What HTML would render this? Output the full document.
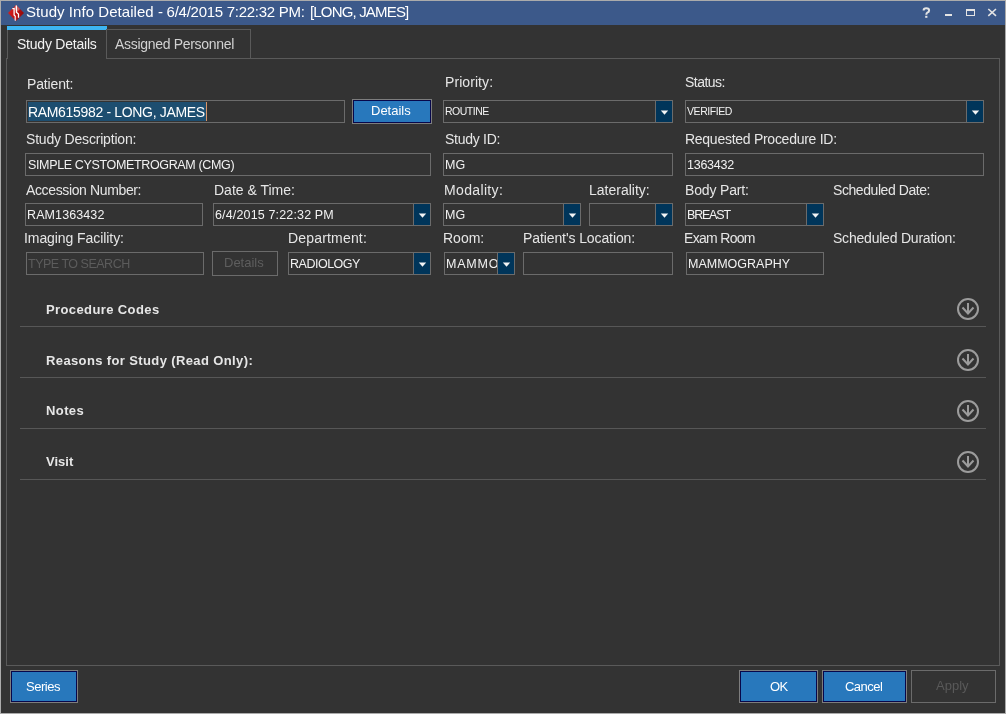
<!DOCTYPE html>
<html><head><meta charset="utf-8">
<style>
*{margin:0;padding:0;box-sizing:border-box}
html,body{width:1006px;height:714px;overflow:hidden;background:#333333}
body{position:relative;font-family:"Liberation Sans",sans-serif;font-size:12px;color:#e8e8e8}
.a{position:absolute}
.t{white-space:nowrap;line-height:1.15;will-change:transform}
</style></head><body>

<div class="a" style="left:0;top:0;width:1006px;height:714px;border:1px solid #ababab"></div>
<div class="a" style="left:1px;top:1px;width:1004px;height:24px;background:#3c598a"></div>
<svg class="a" style="left:7px;top:4px" width="18" height="18" viewBox="0 0 18 18">
<defs><linearGradient id="g" x1="0" y1="0.3" x2="1" y2="0.7"><stop offset="0" stop-color="#d42020"/><stop offset="0.5" stop-color="#c01010"/><stop offset="1" stop-color="#8a0a0a"/></linearGradient></defs>
<path d="M9 1 L17 9 L9 17 L1 9 Z" fill="url(#g)"/>
<path d="M9 1 L13 5 L10 8 L7 4 Z" fill="#e09090" opacity="0.6"/>
<path d="M5.3 4.6 H7.1 V11 L8.4 12.4 V16.6" stroke="#ffffff" stroke-width="1.3" fill="none"/>
<path d="M8.4 12.4 V16.6" stroke="#f4c4c4" stroke-width="1.3" fill="none"/>
<path d="M9.4 1.6 V8.3 L11.5 10 V13.8" stroke="#ffffff" stroke-width="1.3" fill="none"/>
</svg>
<div class="a t" style="left:26px;top:3px;font-size:15px;color:#ffffff;letter-spacing:0.050px">Study Info Detailed</div>
<div class="a t" style="left:158px;top:3px;font-size:15px;color:#ffffff;letter-spacing:-0.270px">- 6/4/2015 7:22:32 PM:</div>
<div class="a t" style="left:310px;top:3px;font-size:15px;color:#ffffff;letter-spacing:-0.830px">[LONG, JAMES]</div>
<svg class="a" style="left:920px;top:5px" width="80" height="16" viewBox="0 0 80 16">
<path d="M3.6 5.6 Q3.6 3.3 6.3 3.3 Q9.1 3.3 9.1 5.4 Q9.1 6.9 7.3 7.7 Q6.3 8.2 6.3 9.8" stroke="#e4e4e4" stroke-width="2" fill="none"/>
<rect x="5.2" y="10.8" width="2.2" height="2" fill="#e4e4e4"/>
<rect x="25" y="9" width="7" height="2" fill="#e4e4e4"/>
<path d="M46 4 H55 V11 H46 Z M47 6 V10 H54 V6 Z" fill="#e4e4e4" fill-rule="evenodd"/>
<path d="M68.3 4 L76 10.8 M76 4 L68.3 10.8" stroke="#e4e4e4" stroke-width="1.6" fill="none"/>
</svg>
<div class="a" style="left:6px;top:58px;width:994px;height:608px;border:1px solid #5a5a5a"></div>
<div class="a" style="left:7px;top:26px;width:100px;height:4px;background:#3db5f2"></div>
<div class="a" style="left:7px;top:30px;width:100px;height:29px;border-left:1px solid #5a5a5a;border-right:1px solid #5a5a5a;background:#333333"></div>
<div class="a" style="left:106px;top:29px;width:145px;height:30px;border:1px solid #5a5a5a;border-left:none"></div>
<div class="a t" style="left:17px;top:36px;font-size:14px;color:#f2f2f2;letter-spacing:-0.225px">Study Details</div>
<div class="a t" style="left:115px;top:36px;font-size:14px;color:#d2d2d2;letter-spacing:-0.309px">Assigned Personnel</div>
<div class="a t" style="left:27px;top:76px;font-size:14px;color:#e6e6e6;letter-spacing:-0.143px">Patient:</div>
<div class="a t" style="left:445px;top:74px;font-size:14px;color:#e6e6e6;letter-spacing:0.075px">Priority:</div>
<div class="a t" style="left:685px;top:74px;font-size:14px;color:#e6e6e6;letter-spacing:-0.533px">Status:</div>
<div class="a" style="left:26px;top:100px;width:319px;height:23px;border:1px solid #6b6b6b"></div>
<div class="a" style="left:28px;top:102px;width:178px;height:19px;background:#1d4e70"></div>
<div class="a" style="left:206px;top:102px;width:1px;height:19px;background:#d8956a"></div>
<div class="a t" style="left:28px;top:104px;font-size:14px;color:#ffffff;letter-spacing:-0.330px">RAM615982 - LONG, JAMES</div>
<div class="a" style="left:352px;top:99px;width:80px;height:25px;background:#2878bc;border:1px solid #7d7d7d;box-shadow:inset 0 0 0 1px #07074a"></div>
<div class="a t" style="left:371px;top:104px;font-size:13px;color:#ffffff;letter-spacing:0.000px">Details</div>
<div class="a" style="left:443px;top:100px;width:230px;height:23px;border:1px solid #6b6b6b"></div>
<div class="a t" style="left:445px;top:105px;font-size:10.5px;color:#f2f2f2;letter-spacing:-0.500px">ROUTINE</div>
<div class="a" style="left:655px;top:101px;width:1px;height:21px;background:#6b6b6b"></div>
<div class="a" style="left:656px;top:101px;width:16px;height:21px;background:#00355a"></div>
<svg class="a" style="left:660px;top:110px" width="9" height="6" viewBox="0 0 9 6"><path d="M0.8 0.6 L8.2 0.6 L4.5 4.7 Z" fill="#f4f4f4"/></svg>
<div class="a" style="left:685px;top:100px;width:299px;height:23px;border:1px solid #6b6b6b"></div>
<div class="a t" style="left:687px;top:105px;font-size:10.5px;color:#f2f2f2;letter-spacing:-0.429px">VERIFIED</div>
<div class="a" style="left:966px;top:101px;width:1px;height:21px;background:#6b6b6b"></div>
<div class="a" style="left:967px;top:101px;width:16px;height:21px;background:#00355a"></div>
<svg class="a" style="left:971px;top:110px" width="9" height="6" viewBox="0 0 9 6"><path d="M0.8 0.6 L8.2 0.6 L4.5 4.7 Z" fill="#f4f4f4"/></svg>
<div class="a t" style="left:26px;top:131px;font-size:14px;color:#e6e6e6;letter-spacing:-0.188px">Study Description:</div>
<div class="a t" style="left:445px;top:131px;font-size:14px;color:#e6e6e6;letter-spacing:-0.275px">Study ID:</div>
<div class="a t" style="left:685px;top:131px;font-size:14px;color:#e6e6e6;letter-spacing:-0.270px">Requested Procedure ID:</div>
<div class="a" style="left:25px;top:153px;width:406px;height:23px;border:1px solid #6b6b6b"></div>
<div class="a t" style="left:28px;top:158px;font-size:12.5px;color:#f2f2f2;letter-spacing:-0.354px">SIMPLE CYSTOMETROGRAM (CMG)</div>
<div class="a" style="left:443px;top:153px;width:230px;height:23px;border:1px solid #6b6b6b"></div>
<div class="a t" style="left:445px;top:158px;font-size:12.5px;color:#f2f2f2;letter-spacing:0.000px">MG</div>
<div class="a" style="left:685px;top:153px;width:299px;height:23px;border:1px solid #6b6b6b"></div>
<div class="a t" style="left:687px;top:158px;font-size:12.5px;color:#f2f2f2;letter-spacing:-0.250px">1363432</div>
<div class="a t" style="left:26px;top:182px;font-size:14px;color:#e6e6e6;letter-spacing:-0.369px">Accession Number:</div>
<div class="a t" style="left:214px;top:182px;font-size:14px;color:#e6e6e6;letter-spacing:0.000px">Date &amp; Time:</div>
<div class="a t" style="left:444px;top:182px;font-size:14px;color:#e6e6e6;letter-spacing:0.350px">Modality:</div>
<div class="a t" style="left:589px;top:182px;font-size:14px;color:#e6e6e6;letter-spacing:0.000px">Laterality:</div>
<div class="a t" style="left:685px;top:182px;font-size:14px;color:#e6e6e6;letter-spacing:-0.156px">Body Part:</div>
<div class="a t" style="left:833px;top:182px;font-size:14px;color:#e6e6e6;letter-spacing:-0.430px">Scheduled Date:</div>
<div class="a" style="left:25px;top:203px;width:178px;height:23px;border:1px solid #6b6b6b"></div>
<div class="a t" style="left:27px;top:208px;font-size:12.5px;color:#f2f2f2;letter-spacing:0.100px">RAM1363432</div>
<div class="a" style="left:213px;top:203px;width:218px;height:23px;border:1px solid #6b6b6b"></div>
<div class="a t" style="left:215px;top:208px;font-size:12.5px;color:#f2f2f2;letter-spacing:0.150px">6/4/2015 7:22:32 PM</div>
<div class="a" style="left:413px;top:204px;width:1px;height:21px;background:#6b6b6b"></div>
<div class="a" style="left:414px;top:204px;width:16px;height:21px;background:#00355a"></div>
<svg class="a" style="left:418px;top:213px" width="9" height="6" viewBox="0 0 9 6"><path d="M0.8 0.6 L8.2 0.6 L4.5 4.7 Z" fill="#f4f4f4"/></svg>
<div class="a" style="left:443px;top:203px;width:138px;height:23px;border:1px solid #6b6b6b"></div>
<div class="a t" style="left:445px;top:208px;font-size:12.5px;color:#f2f2f2;letter-spacing:0.000px">MG</div>
<div class="a" style="left:563px;top:204px;width:1px;height:21px;background:#6b6b6b"></div>
<div class="a" style="left:564px;top:204px;width:16px;height:21px;background:#00355a"></div>
<svg class="a" style="left:568px;top:213px" width="9" height="6" viewBox="0 0 9 6"><path d="M0.8 0.6 L8.2 0.6 L4.5 4.7 Z" fill="#f4f4f4"/></svg>
<div class="a" style="left:589px;top:203px;width:84px;height:23px;border:1px solid #6b6b6b"></div>
<div class="a" style="left:655px;top:204px;width:1px;height:21px;background:#6b6b6b"></div>
<div class="a" style="left:656px;top:204px;width:16px;height:21px;background:#00355a"></div>
<svg class="a" style="left:660px;top:213px" width="9" height="6" viewBox="0 0 9 6"><path d="M0.8 0.6 L8.2 0.6 L4.5 4.7 Z" fill="#f4f4f4"/></svg>
<div class="a" style="left:685px;top:203px;width:139px;height:23px;border:1px solid #6b6b6b"></div>
<div class="a t" style="left:687px;top:208px;font-size:12.5px;color:#f2f2f2;letter-spacing:-1.200px">BREAST</div>
<div class="a" style="left:806px;top:204px;width:1px;height:21px;background:#6b6b6b"></div>
<div class="a" style="left:807px;top:204px;width:16px;height:21px;background:#00355a"></div>
<svg class="a" style="left:811px;top:213px" width="9" height="6" viewBox="0 0 9 6"><path d="M0.8 0.6 L8.2 0.6 L4.5 4.7 Z" fill="#f4f4f4"/></svg>
<div class="a t" style="left:24px;top:230px;font-size:14px;color:#e6e6e6;letter-spacing:-0.075px">Imaging Facility:</div>
<div class="a t" style="left:288px;top:230px;font-size:14px;color:#e6e6e6;letter-spacing:0.180px">Department:</div>
<div class="a t" style="left:443px;top:230px;font-size:14px;color:#e6e6e6;letter-spacing:0.000px">Room:</div>
<div class="a t" style="left:523px;top:230px;font-size:14px;color:#e6e6e6;letter-spacing:-0.100px">Patient's Location:</div>
<div class="a t" style="left:684px;top:230px;font-size:14px;color:#e6e6e6;letter-spacing:-0.688px">Exam Room</div>
<div class="a t" style="left:833px;top:230px;font-size:14px;color:#e6e6e6;letter-spacing:-0.214px">Scheduled Duration:</div>
<div class="a" style="left:26px;top:252px;width:178px;height:23px;border:1px solid #6b6b6b"></div>
<div class="a t" style="left:28px;top:257px;font-size:12.5px;color:#5c5c5c;letter-spacing:-0.492px">TYPE TO SEARCH</div>
<div class="a" style="left:212px;top:251px;width:66px;height:25px;border:1px solid #6b6b6b"></div>
<div class="a t" style="left:224px;top:256px;font-size:13px;color:#5e5e5e;letter-spacing:0.000px">Details</div>
<div class="a" style="left:288px;top:252px;width:143px;height:23px;border:1px solid #6b6b6b"></div>
<div class="a t" style="left:290px;top:257px;font-size:12.5px;color:#f2f2f2;letter-spacing:-0.487px">RADIOLOGY</div>
<div class="a" style="left:413px;top:253px;width:1px;height:21px;background:#6b6b6b"></div>
<div class="a" style="left:414px;top:253px;width:16px;height:21px;background:#00355a"></div>
<svg class="a" style="left:418px;top:262px" width="9" height="6" viewBox="0 0 9 6"><path d="M0.8 0.6 L8.2 0.6 L4.5 4.7 Z" fill="#f4f4f4"/></svg>
<div class="a" style="left:444px;top:252px;width:71px;height:23px;border:1px solid #6b6b6b"></div>
<div class="a t" style="left:446px;top:257px;font-size:12.5px;color:#f2f2f2;letter-spacing:0.800px;width:51px;overflow:hidden">MAMMOGRAPHY</div>
<div class="a" style="left:497px;top:253px;width:1px;height:21px;background:#6b6b6b"></div>
<div class="a" style="left:498px;top:253px;width:16px;height:21px;background:#00355a"></div>
<svg class="a" style="left:502px;top:262px" width="9" height="6" viewBox="0 0 9 6"><path d="M0.8 0.6 L8.2 0.6 L4.5 4.7 Z" fill="#f4f4f4"/></svg>
<div class="a" style="left:523px;top:252px;width:150px;height:23px;border:1px solid #6b6b6b"></div>
<div class="a" style="left:686px;top:252px;width:138px;height:23px;border:1px solid #6b6b6b"></div>
<div class="a t" style="left:688px;top:257px;font-size:12.5px;color:#f2f2f2;letter-spacing:0.000px">MAMMOGRAPHY</div>
<div class="a t" style="left:46px;top:303px;font-size:13px;color:#e6e6e6;letter-spacing:0.393px;font-weight:bold">Procedure Codes</div>
<div class="a" style="left:20px;top:326px;width:966px;height:1px;background:#575757"></div>
<svg class="a" style="left:956px;top:297px" width="24" height="24" viewBox="0 0 24 24"><circle cx="12" cy="12" r="10" stroke="#9c9c9c" stroke-width="2" fill="none"/><path d="M12 6 L12 16.5 M6.5 10.5 L12 16.5 L17.5 10.5" stroke="#9c9c9c" stroke-width="2" fill="none"/></svg>
<div class="a t" style="left:46px;top:354px;font-size:13px;color:#e6e6e6;letter-spacing:0.379px;font-weight:bold">Reasons for Study (Read Only):</div>
<div class="a" style="left:20px;top:377px;width:966px;height:1px;background:#575757"></div>
<svg class="a" style="left:956px;top:348px" width="24" height="24" viewBox="0 0 24 24"><circle cx="12" cy="12" r="10" stroke="#9c9c9c" stroke-width="2" fill="none"/><path d="M12 6 L12 16.5 M6.5 10.5 L12 16.5 L17.5 10.5" stroke="#9c9c9c" stroke-width="2" fill="none"/></svg>
<div class="a t" style="left:46px;top:404px;font-size:13px;color:#e6e6e6;letter-spacing:0.400px;font-weight:bold">Notes</div>
<div class="a" style="left:20px;top:428px;width:966px;height:1px;background:#575757"></div>
<svg class="a" style="left:956px;top:399px" width="24" height="24" viewBox="0 0 24 24"><circle cx="12" cy="12" r="10" stroke="#9c9c9c" stroke-width="2" fill="none"/><path d="M12 6 L12 16.5 M6.5 10.5 L12 16.5 L17.5 10.5" stroke="#9c9c9c" stroke-width="2" fill="none"/></svg>
<div class="a t" style="left:46px;top:455px;font-size:13px;color:#e6e6e6;letter-spacing:0.000px;font-weight:bold">Visit</div>
<div class="a" style="left:20px;top:479px;width:966px;height:1px;background:#575757"></div>
<svg class="a" style="left:956px;top:450px" width="24" height="24" viewBox="0 0 24 24"><circle cx="12" cy="12" r="10" stroke="#9c9c9c" stroke-width="2" fill="none"/><path d="M12 6 L12 16.5 M6.5 10.5 L12 16.5 L17.5 10.5" stroke="#9c9c9c" stroke-width="2" fill="none"/></svg>
<div class="a" style="left:10px;top:670px;width:68px;height:33px;background:#2878bc;border:1px solid #7d7d7d;box-shadow:inset 0 0 0 1px #07074a"></div>
<div class="a t" style="left:26px;top:680px;font-size:13px;color:#ffffff;letter-spacing:-0.460px">Series</div>
<div class="a" style="left:739px;top:670px;width:79px;height:33px;background:#2878bc;border:1px solid #7d7d7d;box-shadow:inset 0 0 0 1px #07074a"></div>
<div class="a t" style="left:770px;top:680px;font-size:13px;color:#ffffff;letter-spacing:-0.600px">OK</div>
<div class="a" style="left:822px;top:670px;width:85px;height:33px;background:#2878bc;border:1px solid #7d7d7d;box-shadow:inset 0 0 0 1px #07074a"></div>
<div class="a t" style="left:845px;top:680px;font-size:13px;color:#ffffff;letter-spacing:-0.520px">Cancel</div>
<div class="a" style="left:911px;top:670px;width:85px;height:33px;border:1px solid #6b6b6b"></div>
<div class="a t" style="left:936px;top:679px;font-size:13px;color:#595959;letter-spacing:0.000px">Apply</div>
</body></html>
